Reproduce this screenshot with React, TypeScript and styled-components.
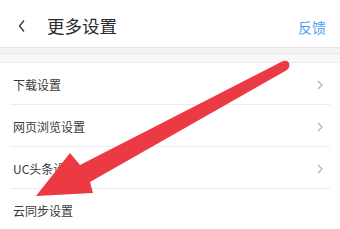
import styled, { createGlobalStyle } from "styled-components";

const GlobalStyle = createGlobalStyle`
  html, body {
    margin: 0;
    padding: 0;
    background: #ffffff;
  }
  body {
    font-family: "Noto Sans CJK SC", "Noto Sans", sans-serif;
  }
`;

const settings = ["下载设置", "网页浏览设置", "UC头条设置", "云同步设置"];

const App = () => {
  return (
    <>
      <GlobalStyle />
      <Page>
        <Header>
          <BackButton>
            <svg width="10" height="14" viewBox="0 0 10 14">
              <polyline points="7,1.5 2.5,7 7,12.5" fill="none" stroke="#333" strokeWidth="1.3" />
            </svg>
          </BackButton>
          <Title>更多设置</Title>
          <Feedback>反馈</Feedback>
        </Header>
        <Band $height={5} $bg="#f4f4f4" $line="#e7e7e7" />
        <Band $height={8} $bg="#f8f8f8" $line="#ececec" />
        <List>
          {settings.map((label, i) => (
            <Row key={label} $last={i === settings.length - 1}>
              <Label>{label}</Label>
              {i < settings.length - 1 && (
                <Chevron>
                  <svg width="6" height="10" viewBox="0 0 6 10">
                    <polyline points="1,1 5,5 1,9" fill="none" stroke="#b2b2b2" strokeWidth="1.3" />
                  </svg>
                </Chevron>
              )}
            </Row>
          ))}
        </List>

        {/* 빨간 화살표 */}
        <Arrow width="340" height="229" viewBox="0 0 340 229">
          <path
            d="M36 196 L70 153 L80 165 L283 61 Q289 60 289.5 65 Q289.5 68 287 70 L90 182 L93 193 Z"
            fill="#ec3a45"
          />
        </Arrow>
      </Page>
    </>
  );
};

const Page = styled.div`
  position: relative;
  width: 340px;
  height: 229px;
  overflow: hidden;
  background: #ffffff;
`;

// 헤더
const Header = styled.div`
  box-sizing: border-box;
  height: 48px;
  display: flex;
  align-items: center;
  padding: 5px 14px 0 17px;
  border-bottom: 1px solid #e4e4e4;
`;

const BackButton = styled.div`
  width: 10px;
  height: 14px;
  display: flex;
`;

const Title = styled.div`
  margin-left: 20px;
  color: #2a2a2a;
  font-size: 17.5px;
  line-height: 1;
`;

const Feedback = styled.div`
  margin-left: auto;
  color: #4a9ff0;
  font-size: 14px;
  line-height: 1;
  margin-top: 1px;
`;

interface BandProps {
  $height: number;
  $bg: string;
  $line: string;
}

const Band = styled.div<BandProps>`
  height: ${(p) => p.$height}px;
  background: ${(p) => p.$bg};
  border-bottom: 1px solid ${(p) => p.$line};
`;

// 목록
const List = styled.div`
  display: flex;
  flex-direction: column;
`;

const Row = styled.div<{ $last: boolean }>`
  box-sizing: border-box;
  height: 42px;
  margin: 0 10px;
  padding: 2px 7px 0 3px;
  display: flex;
  align-items: center;
  border-bottom: 1px solid ${(p) => (p.$last ? "transparent" : "#ececec")};
`;

const Label = styled.div`
  color: #3a3a3a;
  font-size: 12px;
  line-height: 1;
`;

const Chevron = styled.div`
  margin-left: auto;
  display: flex;
`;

const Arrow = styled.svg`
  position: absolute;
  left: 0;
  top: 0;
  pointer-events: none;
`;

export default App;
